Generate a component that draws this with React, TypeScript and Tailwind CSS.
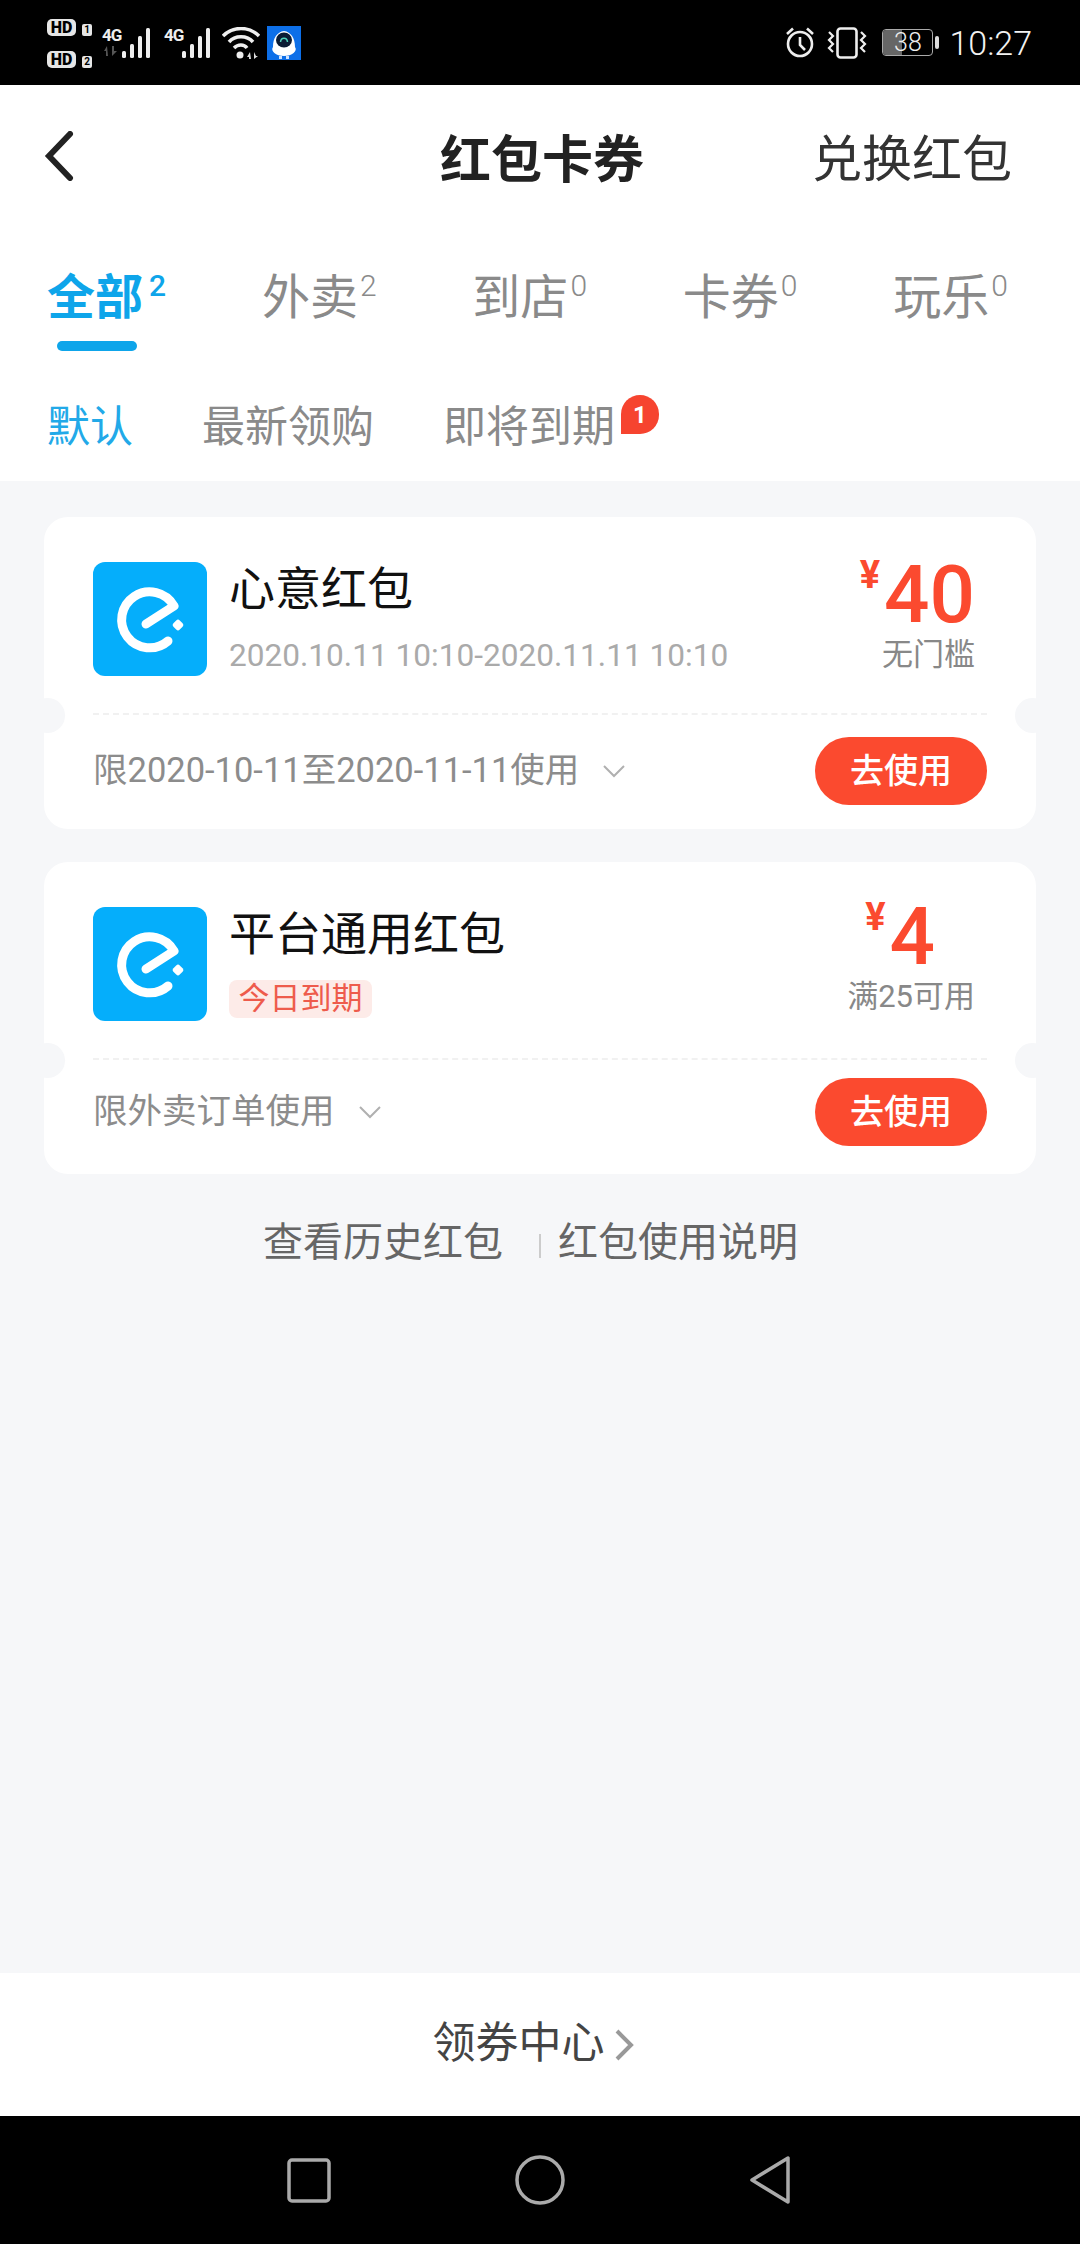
const tabs = [
  { label: '全部', count: 2, active: true },
  { label: '外卖', count: 2 },
  { label: '到店', count: 0 },
  { label: '卡券', count: 0 },
  { label: '玩乐', count: 0 },
];

const coupons = [
  {
    title: '心意红包',
    date: '2020.10.11 10:10-2020.11.11 10:10',
    amount: '40',
    amountClass: 'mr-0 pt-[38px]',
    rule: '无门槛',
    note: '限2020-10-11至2020-11-11使用',
    footClass: 'pt-[22px]',
  },
  {
    title: '平台通用红包',
    tag: '今日到期',
    amount: '4',
    amountClass: 'mr-[40px] pt-[35px]',
    rule: '满25可用',
    note: '限外卖订单使用',
    footClass: 'pt-[18px]',
  },
];

const Logo = () => (
  <div className="h-[114px] w-[114px] shrink-0 rounded-[12px] bg-[#05aefb]">
    <svg viewBox="0 0 114 114" className="h-full w-full">
      <path d="M75 79 A28 28 0 1 1 81 44 L53 62" fill="none" stroke="#fff" strokeWidth="9" strokeLinecap="round" strokeLinejoin="round" />
      <rect x="80.5" y="58.5" width="9" height="9" rx="2.5" fill="#fff" transform="rotate(45 85 63)" />
    </svg>
  </div>
);

const Chevron = () => (
  <svg viewBox="0 0 24 14" className="h-[14px] w-[24px]">
    <path d="M2 2 L12 12 L22 2" fill="none" stroke="#b0b0b0" strokeWidth="2" />
  </svg>
);

const Coupon = ({ item }: { item: (typeof coupons)[number] }) => (
  <div className="relative h-[312px] rounded-[24px] bg-white">
    <div className="absolute left-[-14px] top-[181px] h-[35px] w-[35px] rounded-full bg-[#f6f7f9]" />
    <div className="absolute right-[-14px] top-[181px] h-[35px] w-[35px] rounded-full bg-[#f6f7f9]" />
    <div className="mx-[49px] flex h-[198px] border-b-2 border-dashed border-[#f1f1f1]">
      <div className="pt-[45px]">
        <Logo />
      </div>
      <div className="ml-[22px] flex-1 pt-[46px]">
        <div className="text-[46px] leading-[52px] text-[#111]">{item.title}</div>
        {item.date && <div className="mt-[21px] whitespace-nowrap text-[31.6px] leading-[40px] text-[#aaa]">{item.date}</div>}
        {item.tag && (
          <div className="mt-[20px] w-[143px] rounded-[8px] bg-[#fdebe8] text-center text-[31px] leading-[38px] text-[#ee5b4c]">
            {item.tag}
          </div>
        )}
      </div>
      <div className="absolute right-[61px] top-0 flex flex-col items-end">
        <div className={`flex items-start ${item.amountClass}`}>
          <span className="mr-[4px] mt-[-4px] text-[38px] font-bold leading-[48px] text-[#fb4a2f]">¥</span>
          <span className="text-[80px] font-medium leading-[80px] text-[#fb4a2f]">{item.amount}</span>
        </div>
        <div className="text-[31px] leading-[40px] text-[#888]">{item.rule}</div>
      </div>
    </div>
    <div className={`mx-[49px] flex items-start justify-between ${item.footClass}`}>
      <div className="flex h-[68px] items-center">
        <span className="text-[34.5px] text-[#8c8c8c]">{item.note}</span>
        <span className="ml-[23px]">
          <Chevron />
        </span>
      </div>
      <div className="flex h-[68px] w-[172px] items-center justify-center rounded-full bg-[#fb4a2f] text-[34px] font-medium text-white">
        去使用
      </div>
    </div>
  </div>
);

const Bars = () => (
  <svg viewBox="0 0 30 30" className="h-[30px] w-[30px]">
    <rect x="0" y="23" width="4" height="7" rx="1.5" fill="#eee" />
    <rect x="8" y="16" width="4" height="14" rx="1.5" fill="#eee" />
    <rect x="16" y="8" width="4" height="22" rx="1.5" fill="#eee" />
    <rect x="24" y="0" width="4" height="30" rx="1.5" fill="#eee" />
  </svg>
);

const SimBadge = ({ n }: { n: string }) => (
  <div className="flex items-end">
    <div className="flex h-[17px] w-[29px] items-center justify-center rounded-[5px] bg-[#e6e6e6] text-[16px] font-black leading-none text-black">
      HD
    </div>
    <div className="ml-[6px] flex h-[12px] w-[10px] items-center justify-center rounded-[2px] bg-[#e6e6e6] text-[10px] font-bold leading-none text-black">
      {n}
    </div>
  </div>
);

const StatusBar = () => (
  <div className="flex h-[85px] shrink-0 items-center justify-between bg-black pl-[47px] pr-[48px]">
    <div className="flex items-center">
      <div className="flex flex-col gap-[15px] pt-[2px]">
        <SimBadge n="1" />
        <SimBadge n="2" />
      </div>
      <div className="ml-[10px] flex h-[30px] items-end">
        <div className="flex w-[20px] flex-col self-start">
          <span className="text-[17px] font-bold leading-[15px] tracking-[-1px] text-[#eee]">4G</span>
          <svg viewBox="0 0 18 10" className="mt-[3px] h-[10px] w-[18px]">
            <path d="M5 0 L2 5 L4 5 L4 10 L6 10 Z M10 0 L10 10 L15 5 L12 5 L12 0 Z" fill="#555" />
          </svg>
        </div>
        <Bars />
      </div>
      <div className="ml-[12px] flex h-[30px] items-end">
        <span className="w-[18px] self-start text-[17px] font-bold leading-[15px] tracking-[-1px] text-[#eee]">4G</span>
        <Bars />
      </div>
      <svg viewBox="0 0 38 32" className="ml-[10px] h-[32px] w-[38px]">
        <path d="M1 9 C11 -1 27 -1 37 9" fill="none" stroke="#eee" strokeWidth="3.5" />
        <path d="M7 15 C13 8 25 8 31 15" fill="none" stroke="#eee" strokeWidth="3.5" />
        <path d="M12 21 C16 17 22 17 25 21" fill="none" stroke="#eee" strokeWidth="3.5" />
        <circle cx="18" cy="28" r="3.5" fill="#eee" />
        <path d="M28 25 L25 30 L27 30 L27 32 L29 32 Z M32 25 L32 32 L36 29 L34 29 Z" fill="#ddd" />
      </svg>
      <div className="ml-[7px] h-[34px] w-[34px] bg-[#0d6fe8]">
        <svg viewBox="0 0 34 34" className="h-full w-full">
          <path d="M6 21 C6 12 10 6 17 5 C24 6 28 12 28 21 C31 25 25 30 17 30 C9 30 3 25 6 21 Z" fill="#fff" />
          <ellipse cx="17" cy="14" rx="8" ry="7.5" fill="#0b1b33" />
          <path d="M13.5 16 C14 11 20 11 20.5 16" fill="none" stroke="#4fd0b8" strokeWidth="1.5" />
          <rect x="12" y="30" width="3" height="3" fill="#cfe3ff" />
          <rect x="19" y="30" width="3" height="3" fill="#cfe3ff" />
        </svg>
      </div>
    </div>
    <div className="flex items-center">
      <svg viewBox="0 0 30 31" className="h-[31px] w-[30px]">
        <circle cx="15" cy="17" r="12" fill="none" stroke="#eee" strokeWidth="2.6" />
        <path d="M15 10 L15 18 L20 23" fill="none" stroke="#eee" strokeWidth="2.6" />
        <path d="M2 7 L8 1.5 M28 7 L22 1.5" fill="none" stroke="#eee" strokeWidth="2.6" />
      </svg>
      <svg viewBox="0 0 40 32" className="ml-[12px] h-[32px] w-[40px]">
        <rect x="10.5" y="1.5" width="19" height="29" rx="3" fill="none" stroke="#eee" strokeWidth="2.6" />
        <path d="M2 5 L6 9 L2 13 L6 17 L2 21 L6 25" fill="none" stroke="#eee" strokeWidth="2.2" />
        <path d="M34 5 L38 9 L34 13 L38 17 L34 21 L38 25" fill="none" stroke="#eee" strokeWidth="2.2" />
      </svg>
      <div className="relative ml-[15px] flex h-[27px] w-[51px] items-center justify-center overflow-hidden rounded-[4px] border border-[#aaa]">
        <div className="absolute inset-y-0 left-0 w-[19px] bg-[#666]" />
        <span className="relative text-[25px] font-light leading-none text-[#eee]">38</span>
      </div>
      <div className="ml-[2px] h-[13px] w-[4px] rounded-[2px] bg-[#ddd]" />
      <span className="ml-[10px] text-[34px] font-light leading-none text-[#f2f2f2]">10:27</span>
    </div>
  </div>
);

export default function App() {
  return (
    <div className="flex h-[2244px] w-[1080px] flex-col bg-[#f6f7f9] font-['Roboto','Noto_Sans_CJK_SC',sans-serif]">
      <StatusBar />

      <div className="h-[396px] shrink-0 bg-white">
        <div className="relative flex h-[150px] items-center justify-between pl-[44px] pr-[68px]">
          <svg viewBox="0 0 30 50" className="mt-[-8px] h-[50px] w-[30px]">
            <path d="M26 3 L5 25 L26 47" fill="none" stroke="#222" strokeWidth="6" strokeLinecap="round" />
          </svg>
          <div className="absolute left-[440px] text-[51px] font-bold leading-none text-[#222]">红包卡券</div>
          <div className="text-[50px] leading-none text-[#333]">兑换红包</div>
        </div>

        <div className="flex justify-between pl-[47px] pr-[72px] pt-[33px]">
          {tabs.map((tab) => (
            <div key={tab.label} className="flex flex-col">
              <div className="flex items-start">
                <span className={tab.active ? 'text-[48px] font-bold leading-[60px] text-[#0ea5ea]' : 'text-[48px] leading-[60px] text-[#8a8a8a]'}>
                  {tab.label}
                </span>
                <span className={tab.active ? 'ml-[6px] text-[30px] font-medium leading-[36px] text-[#0ea5ea]' : 'ml-[2px] text-[30px] font-light leading-[36px] text-[#8a8a8a]'}>
                  {tab.count}
                </span>
              </div>
              <div className={tab.active ? 'ml-[10px] mt-[13px] h-[10px] w-[80px] rounded-full bg-[#0ea5ea]' : 'mt-[13px] h-[10px]'} />
            </div>
          ))}
        </div>

        <div className="flex items-start pl-[47px] pt-[46px] text-[43px] leading-[60px] text-[#8a8a8a]">
          <span className="text-[#22a9e8]">默认</span>
          <span className="ml-[69px]">最新领购</span>
          <span className="ml-[69px]">即将到期</span>
          <span className="ml-[6px] mt-[-2px] flex h-[39px] w-[38px] items-center justify-center rounded-[19px] rounded-bl-none bg-[#f6442f] text-[24px] font-bold leading-none text-white">
            1
          </span>
        </div>
      </div>

      <div className="flex flex-1 flex-col gap-[33px] px-[44px] pt-[36px]">
        {coupons.map((item) => (
          <Coupon key={item.title} item={item} />
        ))}
        <div className="mt-[8px] flex items-center pl-[219px] text-[40px] leading-[56px] text-[#666]">
          <span>查看历史红包</span>
          <span className="ml-[36px] mr-[17px] mt-[6px] h-[24px] w-[2px] bg-[#ccc]" />
          <span>红包使用说明</span>
        </div>
      </div>

      <div className="flex h-[143px] shrink-0 items-center justify-center bg-white pb-[2px] pr-[14px]">
        <span className="text-[43px] text-[#444]">领券中心</span>
        <svg viewBox="0 0 20 34" className="ml-[9px] mt-[2px] h-[34px] w-[20px]">
          <path d="M3 3 L17 17 L3 31" fill="none" stroke="#999" strokeWidth="4" />
        </svg>
      </div>

      <div className="flex h-[128px] shrink-0 items-center justify-between bg-black pl-[287px] pr-[289px]">
        <svg viewBox="0 0 44 45" className="h-[45px] w-[44px]">
          <rect x="2" y="2" width="40" height="41" rx="3" fill="none" stroke="#aaa" strokeWidth="3.5" />
        </svg>
        <svg viewBox="0 0 50 50" className="h-[50px] w-[50px]">
          <circle cx="25" cy="25" r="23" fill="none" stroke="#aaa" strokeWidth="3.5" />
        </svg>
        <svg viewBox="0 0 42 50" className="h-[50px] w-[42px]">
          <path d="M39 3 L39 47 L3 25 Z" fill="none" stroke="#aaa" strokeWidth="3.5" strokeLinejoin="round" />
        </svg>
      </div>
    </div>
  );
}
